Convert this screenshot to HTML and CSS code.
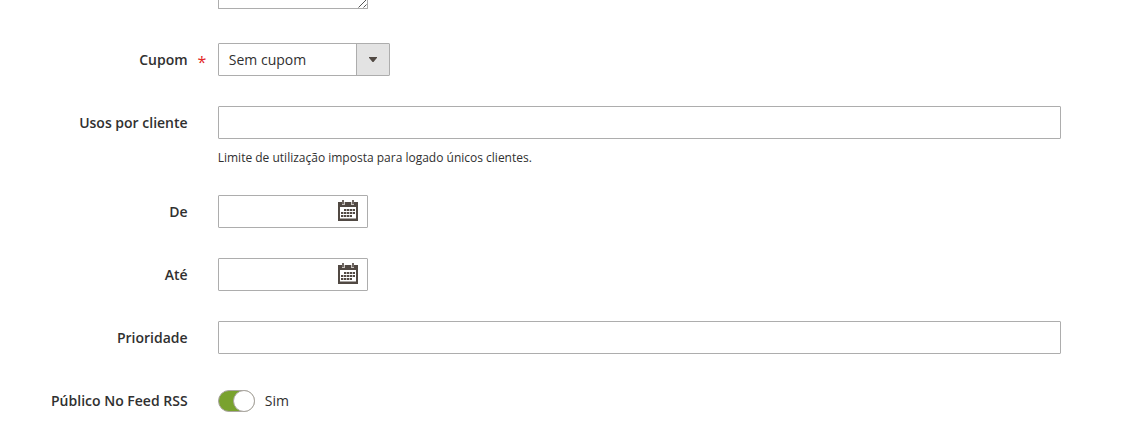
FILE: index.html
```html
<!DOCTYPE html>
<html lang="pt-BR">
<head>
<meta charset="utf-8">
<title>Regra</title>
<link rel="stylesheet" href="styles.css">
</head>
<body>
<svg class="defs" aria-hidden="true">
  <symbol id="calendar" viewBox="0 0 20 21">
    <path fill="#514943" fill-rule="evenodd" d="M0 2h20v19H0zM2 7v11.500h16V7z"/>
    <path fill="#c9c4c0" d="M4 2h3v3H4zM13 2h3v3h-3z"/>
    <path fill="#6f6762" d="M4 0h2v4H4zM14 0h2v4h-2z"/>
    <path fill="#514943" d="M6 9h2v2H6zM9 9h2v2H9zM12 9h2v2h-2zM15 9h2v2h-2zM3 12h2v2H3zM6 12h2v2H6zM9 12h2v2H9zM12 12h2v2h-2zM15 12h2v2h-2zM3 15h2v2H3zM6 15h2v2H6zM9 15h2v2H9zM12 15h2v2h-2z"/>
    <path fill="#514943" opacity=".4" d="M8 9h1v2H8zM11 9h1v2h-1zM14 9h1v2h-1zM5 12h1v2H5zM8 12h1v2H8zM11 12h1v2h-1zM14 12h1v2h-1zM5 15h1v2H5zM8 15h1v2H8zM11 15h1v2h-1z"/>
  </symbol>
</svg>
<form class="form">
  <div class="description">
    <svg class="grip" width="9" height="9" viewBox="0 0 9 9"><path d="M0.500 8.500l8-8M5.500 8.500l3-3" stroke="#555" fill="none"/></svg>
  </div>
  <div class="field">
    <span class="label required">Cupom</span>
    <div class="select"><span class="value">Sem cupom</span><span class="arrow"><svg width="8" height="5" viewBox="0 0 8 5"><path d="M0 0h8v.7L4.500 5h-1L0 .7z" fill="#514943"/></svg></span></div>
  </div>
  <div class="field">
    <span class="label">Usos por cliente</span>
    <div class="control"><div class="input"></div><div class="note">Limite de utilização imposta para logado únicos clientes.</div></div>
  </div>
  <div class="field">
    <span class="label">De</span>
    <div class="date"><svg width="20" height="21"><use href="#calendar"/></svg></div>
  </div>
  <div class="field">
    <span class="label">Até</span>
    <div class="date"><svg width="20" height="21"><use href="#calendar"/></svg></div>
  </div>
  <div class="field">
    <span class="label">Prioridade</span>
    <div class="control"><div class="input"></div></div>
  </div>
  <div class="field">
    <span class="label">Público No Feed RSS</span>
    <div class="switch"><span class="track"><span class="knob"></span></span>Sim</div>
  </div>
</form>
</body>
</html>
```
FILE: styles.css
```css
* { box-sizing: border-box; }
body {
  margin: 0;
  height: 423px;
  overflow: hidden;
  background: #fff;
  color: #303030;
  font: 14px/33px "Open Sans", "Noto Sans", sans-serif;
}
.defs { display: none; }
.form {
  display: flex;
  flex-direction: column;
  gap: 30px;
}
.description {
  display: flex;
  justify-content: flex-end;
  width: 150px;
  height: 9px;
  margin: 0 0 4px 218px;
  border: 1px solid #adadad;
  border-top: 0;
  border-radius: 0 0 1px 1px;
}
.grip { margin-top: -1px; }
.field {
  display: grid;
  grid-template-columns: 188px 843px;
  column-gap: 30px;
}
.label {
  position: relative;
  padding-right: 0.4px;
  font-weight: 600;
  text-align: right;
}
.required::after {
  content: "*";
  position: absolute;
  left: 197.6px;
  top: 3px;
  color: #e22626;
  font-size: 16px;
  font-weight: 500;
}
.input, .date, .select {
  height: 33px;
  border: 1px solid #adadad;
  border-radius: 1px;
}
.select {
  display: flex;
  width: 172px;
  line-height: 31px;
}
.value { flex: 1; padding-left: 9.8px; }
.arrow {
  display: flex;
  align-items: center;
  justify-content: center;
  width: 33px;
  border-left: 1px solid #adadad;
  background: #e3e3e3;
}
.note {
  margin: 11px 0 -1px -0.3px;
  font-size: 12px;
  line-height: 16px;
}
.date {
  display: flex;
  justify-content: flex-end;
  width: 150px;
  padding: 4px 9px 0 0;
}
.switch {
  display: flex;
  align-items: center;
  gap: 9.8px;
}
.track {
  display: flex;
  justify-content: flex-end;
  width: 37px;
  height: 22px;
  border: 1px solid #aaa6a0;
  border-radius: 11px;
  background: #79a22e;
}
.knob {
  width: 22px;
  height: 22px;
  margin: -1px;
  border: 1px solid #aaa6a0;
  border-radius: 50%;
  background: #fff;
}
```
